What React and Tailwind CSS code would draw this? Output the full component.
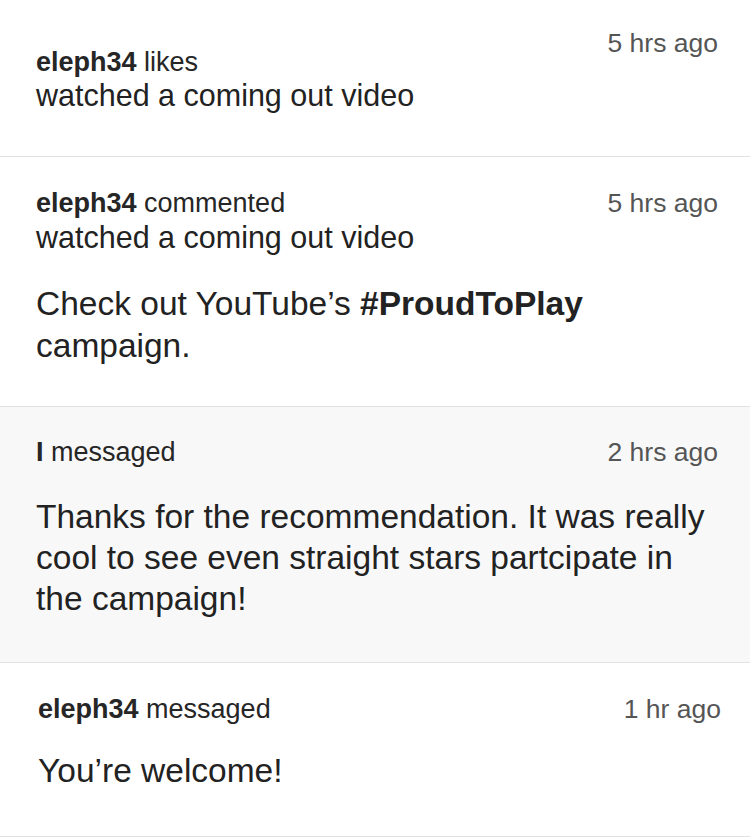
import React from 'react'

const items = [
  {
    id: 1,
    user: 'eleph34',
    action: 'commented',
    time: '5 hrs ago',
    title: 'watched a coming out video',
    body: (
      <>
        Check out YouTube’s <span className="font-bold">#ProudToPlay</span> campaign.
      </>
    ),
    pad: 'pt-[29px] pb-[39px] pl-[36px] pr-[32px]',
    bodyCls: 'mt-[28px] leading-[42px]',
  },
  {
    id: 2,
    user: 'I',
    action: 'messaged',
    time: '2 hrs ago',
    body: 'Thanks for the recommendation. It was really cool to see even straight stars partcipate in the campaign!',
    pad: 'pt-[28px] pb-[43px] pl-[36px] pr-[32px] bg-[#f8f8f8]',
    bodyCls: 'mt-[27px] leading-[41px]',
  },
  {
    id: 3,
    user: 'eleph34',
    action: 'messaged',
    time: '1 hr ago',
    body: 'You’re welcome!',
    pad: 'pt-[29px] pb-[45px] pl-[38px] pr-[29px]',
    bodyCls: 'mt-[24px] leading-[41px]',
  },
]

const Header = ({ user, action }) => (
  <div className="text-[27px] leading-[34px] text-[#262626]">
    <span className="font-bold">{user}</span> {action}
  </div>
)

const Time = ({ children }) => (
  <div className="text-[26.5px] leading-[34px] text-[#555] whitespace-nowrap">{children}</div>
)

const App = () => {
  return (
    <div className="w-[750px] bg-white font-['Liberation_Sans',Arial,sans-serif]">
      <div className="h-[157px] flex justify-between pl-[36px] pr-[32px] pt-[26px] border-b border-[#e2e2e2]">
        <div className="self-center -mt-[26px]">
          <Header user="eleph34" action="likes" />
          <div className="text-[30.5px] leading-[33px] text-[#222]">watched a coming out video</div>
        </div>
        <Time>5 hrs ago</Time>
      </div>

      {items.map((it) => (
        <div key={it.id} className={`border-b border-[#e2e2e2] ${it.pad}`}>
          <div className="flex justify-between">
            <Header user={it.user} action={it.action} />
            <Time>{it.time}</Time>
          </div>
          {it.title && <div className="text-[30.5px] leading-[35px] text-[#222]">{it.title}</div>}
          <div className={`text-[33.5px] text-[#222] ${it.bodyCls}`}>{it.body}</div>
        </div>
      ))}
    </div>
  )
}

export default App
